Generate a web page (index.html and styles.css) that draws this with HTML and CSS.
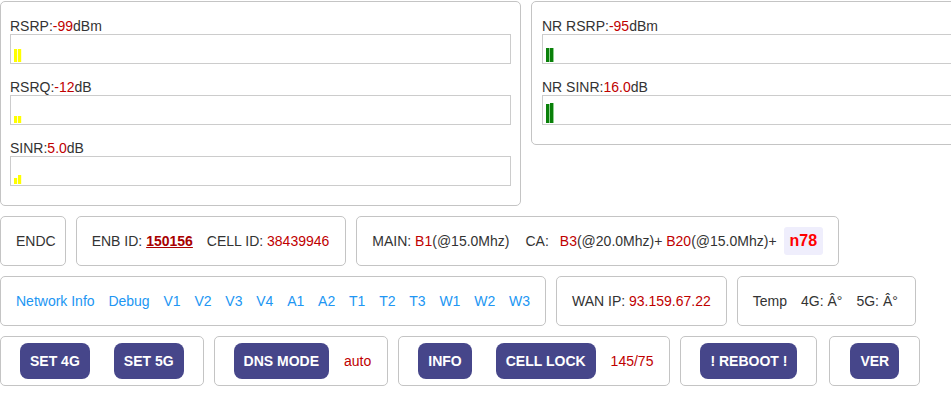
FILE: index.html
```html
<!DOCTYPE html>
<html>
	<head>
		<meta charset="UTF-8">
		<title>Signal</title>
		<link rel="stylesheet" href="styles.css">
	</head>
	<body>
		<div class="row top">
			<div class="panel lte">
				<div class="label">RSRP:<span class="val">-99</span>dBm</div>
				<div class="meter">
					<span class="bar y" style="height: 13px"></span>
					<span class="bar y" style="height: 13px"></span>
				</div>
				<div class="label">RSRQ:<span class="val">-12</span>dB</div>
				<div class="meter">
					<span class="bar y" style="height: 7px"></span>
					<span class="bar y" style="height: 7px"></span>
				</div>
				<div class="label">SINR:<span class="val">5.0</span>dB</div>
				<div class="meter">
					<span class="bar y" style="height: 6px"></span>
					<span class="bar y" style="height: 9px"></span>
				</div>
			</div>
			<div class="panel nr">
				<div class="label">NR RSRP:<span class="val">-95</span>dBm</div>
				<div class="meter">
					<span class="bar g" style="height: 14px"></span>
					<span class="bar g" style="height: 14px"></span>
				</div>
				<div class="label">NR SINR:<span class="val">16.0</span>dB</div>
				<div class="meter">
					<span class="bar g" style="height: 19px"></span>
					<span class="bar g" style="height: 20px"></span>
				</div>
			</div>
		</div>

		<div class="row">
			<div class="box endc">ENDC</div>
			<div class="box enb-box">
				<span>ENB ID: <a class="enb" href="#">150156</a></span>
				<span>CELL ID: <span class="val">38439946</span></span>
			</div>
			<div class="box main">
				<span>MAIN: <span class="val">B1</span>(@15.0Mhz)</span>
				<span class="ca">CA:<span class="val sp">B3</span>(@20.0Mhz)+ <span class="val">B20</span>(@15.0Mhz)+</span>
				<span class="band">n78</span>
			</div>
		</div>

		<div class="row">
			<div class="box links">
				<a href="#">Network Info</a>
				<a href="#">Debug</a>
				<a href="#">V1</a>
				<a href="#">V2</a>
				<a href="#">V3</a>
				<a href="#">V4</a>
				<a href="#">A1</a>
				<a href="#">A2</a>
				<a href="#">T1</a>
				<a href="#">T2</a>
				<a href="#">T3</a>
				<a href="#">W1</a>
				<a href="#">W2</a>
				<a href="#">W3</a>
			</div>
			<div class="box">
				<span>WAN IP: <span class="val">93.159.67.22</span></span>
			</div>
			<div class="box temp">
				<span>Temp</span>
				<span>4G: Â°</span>
				<span>5G: Â°</span>
			</div>
		</div>

		<div class="row">
			<div class="box btns">
				<button class="btn">SET 4G</button>
				<button class="btn">SET 5G</button>
			</div>
			<div class="box btns">
				<button class="btn">DNS MODE</button>
				<span class="val note">auto</span>
			</div>
			<div class="box btns">
				<button class="btn">INFO</button>
				<button class="btn">CELL LOCK</button>
				<span class="val note">145/75</span>
			</div>
			<div class="box btns">
				<button class="btn">! REBOOT !</button>
			</div>
			<div class="box btns ver">
				<button class="btn">VER</button>
			</div>
		</div>
	</body>
</html>
```

FILE: styles.css
```css
html, body {
	overflow: hidden;
}

body {
	margin: 0;
	padding-top: 1px;
	font-family: "Liberation Sans", Arial, sans-serif;
	font-size: 14px;
	line-height: 16px;
	color: #333;
}

.row {
	display: flex;
	gap: 10px;
	margin-bottom: 10px;
}

.top {
	align-items: flex-start;
}

.panel {
	flex: none;
	box-sizing: border-box;
	padding: 16px 9px 19px 9px;
	border: 1px solid #c4c4c4;
	border-radius: 5px;
}

.lte { width: 521px; }
.nr { width: 440px; padding-left: 10px; }

.label {
	height: 16px;
}

.meter {
	box-sizing: border-box;
	height: 30px;
	margin-bottom: 15px;
	padding: 0 3px 1px 3px;
	border: 1px solid #ccc;
	display: flex;
	align-items: flex-end;
}

.meter:last-child {
	margin-bottom: 0;
}

.bar {
	width: 3px;
	border-right: 1px solid #ffffd0;
}

.bar.y { background-color: #ffff00; }
.bar.g { background-color: #0a800a; border-right-color: #8fd08f; }

.val { color: #c00000; }

.box {
	box-sizing: border-box;
	height: 50px;
	padding: 0 15px;
	border: 1px solid #c4c4c4;
	border-radius: 5px;
	display: flex;
	align-items: center;
	gap: 14px;
	white-space: nowrap;
}

.endc { padding-right: 9px; }
.enb-box { padding-right: 16px; }
.temp { padding-right: 17px; }

a.enb {
	color: #a80000;
	font-weight: bold;
}

.main { gap: 0; padding-right: 15px; }
.main .ca { margin-left: 16px; }
.main .sp { margin-left: 11px; }

.band {
	margin-left: 7px;
	padding: 5px 6px;
	line-height: 18px;
	background-color: #efeefc;
	border-radius: 3px;
	color: #ff0000;
	font-size: 16px;
	font-weight: bold;
}

.links { gap: 13.8px; }

.links a {
	color: #2196f3;
	text-decoration: none;
}

.btns {
	gap: 0;
	padding: 0 7px;
}

.ver { margin-left: 2px; padding: 0 8px; }

.btn {
	margin: 0 12px;
	height: 36px;
	padding: 0 10px;
	border: none;
	border-radius: 8px;
	background-color: #46468a;
	color: #fff;
	font-family: "Liberation Sans", Arial, sans-serif;
	font-size: 14px;
	font-weight: bold;
}

.note {
	margin: 0 9px 0 3px;
}
```
